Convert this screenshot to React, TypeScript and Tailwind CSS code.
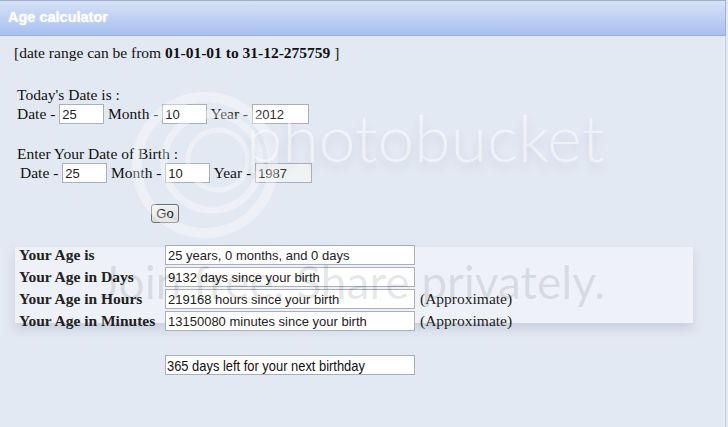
import React from "react";

const serif = { fontFamily: '"Liberation Serif", "Times New Roman", serif' };
const sans = { fontFamily: '"Liberation Sans", Arial, sans-serif' };

function Field({ value, w }: { value: string; w: string }) {
  return (
    <input
      readOnly
      value={value}
      className={`${w} h-[20px] border border-[#a9b0ba] bg-white px-[2px] align-middle text-[13px] leading-none text-[#222] outline-none`}
      style={sans}
    />
  );
}

function DateRow({ d, m, y, yearGrey, lead }: { d: string; m: string; y: string; yearGrey?: boolean; lead?: boolean }) {
  return (
    <div className={`flex h-[20px] items-center whitespace-pre ${lead ? "pl-[3px]" : ""}`}>
      <span>Date - </span>
      <Field value={d} w="w-[45px]" />
      <span> Month - </span>
      <Field value={m} w="w-[45px]" />
      <span> Year - </span>
      <input
        readOnly
        value={y}
        className={`h-[20px] w-[57px] border border-[#a9b0ba] ${yearGrey ? "bg-[#f1f2f4]" : "bg-white"} px-[2px] text-[13px] text-[#333] outline-none`}
        style={sans}
      />
    </div>
  );
}

const results: { label: string; value: string; note?: string }[] = [
  { label: "Your Age is", value: "25 years, 0 months, and 0 days" },
  { label: "Your Age in Days", value: "9132 days since your birth" },
  { label: "Your Age in Hours", value: "219168 hours since your birth", note: "(Approximate)" },
  { label: "Your Age in Minutes", value: "13150080 minutes since your birth", note: "(Approximate)" },
];

export default function App() {
  return (
    <div className="relative h-[427px] w-[728px] overflow-hidden bg-[#e3e9f3]" style={serif}>
      {/* panel header */}
      <div className="mr-[2px] flex h-[36px] items-center border-t border-b border-r border-[#9fb0cc] bg-gradient-to-b from-[#d7e1f6] to-[#a7c0f0] pl-[8px]">
        <span
          className="text-[14.5px] font-bold text-white [text-shadow:0_0_2px_rgba(255,255,255,0.7)]"
          style={sans}
        >
          Age calculator
        </span>
      </div>

      <div className="relative z-10 mr-[2px] h-[391px] border-r border-[#c9d0dc] text-[15.5px] leading-[18px] text-[#111]">
        <div className="pl-[14px] pt-[8px]">
          [date range can be from <b>01-01-01 to 31-12-275759</b> ]
        </div>

        <div className="mt-[24px] pl-[17px]">
          <div>Today's Date is :</div>
          <DateRow d="25" m="10" y="2012" />
        </div>

        <div className="mt-[21px] pl-[17px]">
          <div>Enter Your Date of Birth :</div>
          <DateRow d="25" m="10" y="1987" yearGrey lead />
        </div>

        <div className="mt-[21px] pl-[151px]">
          <button
            className="h-[19px] w-[28px] rounded-[3px] border border-[#707070] bg-gradient-to-b from-[#f2f2f2] to-[#d8d8d8] text-[13px] leading-none text-[#111]"
            style={sans}
          >
            Go
          </button>
        </div>

        <div className="mt-[22px] grid grid-cols-[146px_250px_auto] gap-y-[2px] pl-[19px]">
          {results.map((r) => (
            <React.Fragment key={r.label}>
              <div className="flex h-[20px] items-center font-bold text-[#222]">{r.label}</div>
              <Field value={r.value} w="w-[250px]" />
              <div className="flex h-[20px] items-center pl-[5px] text-[#222]">{r.note ?? ""}</div>
            </React.Fragment>
          ))}
        </div>

        <div className="mt-[24px] pl-[165px]">
          <div className="flex h-[20px] w-[250px] items-center overflow-hidden border border-[#a9b0ba] bg-white px-[1px]">
            <span
              className="origin-left scale-x-[0.86] whitespace-nowrap text-[15px] leading-none text-[#111]"
              style={sans}
            >
              365 days left for your next birthday
            </span>
          </div>
        </div>
      </div>

      {/* hosting watermark */}
      <svg className="pointer-events-none absolute left-[120px] top-[80px] z-20" width="170" height="170" viewBox="0 0 170 170">
        <g fill="none" stroke="#ffffff" strokeOpacity="0.35">
          <circle cx="85" cy="85" r="68" strokeWidth="10" />
          <circle cx="92" cy="82" r="48" strokeWidth="7" />
          <circle cx="98" cy="80" r="30" strokeWidth="5" />
        </g>
      </svg>
      <div
        className="pointer-events-none absolute left-[246px] top-[104px] z-20 text-[66px] leading-none text-white/50 [text-shadow:0_6px_8px_rgba(120,130,160,0.2)]"
        style={{ fontFamily: 'Lato, "Open Sans", sans-serif', fontWeight: 300 }}
      >
        photobucket
      </div>
      <div className="pointer-events-none absolute left-[15px] top-[247px] z-0 h-[76px] w-[678px] bg-[#eef1f8] shadow-[0_6px_10px_rgba(120,130,160,0.25)]" />
      <div
        className="pointer-events-none absolute left-[100px] top-[254px] z-20 whitespace-nowrap text-[46px] leading-[56px] text-black/10"
        style={{ fontFamily: 'Lato, "Open Sans", sans-serif' }}
      >
        Join free. Share privately.
      </div>
    </div>
  );
}
